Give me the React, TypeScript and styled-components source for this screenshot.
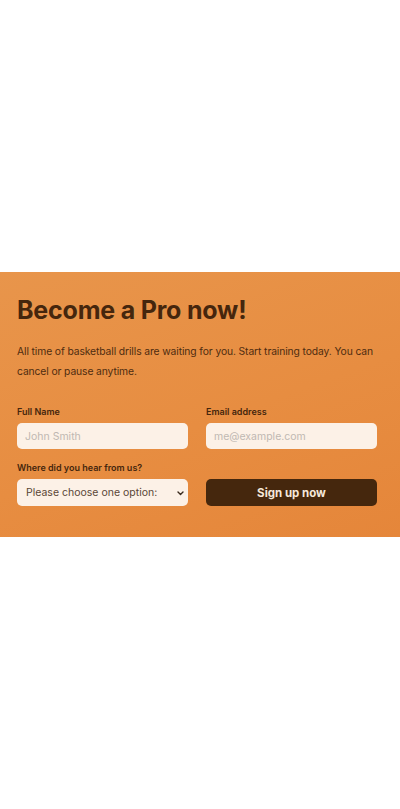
import React from "react";
import styled, { createGlobalStyle } from "styled-components";

const Global = createGlobalStyle`
  html, body { margin: 0; padding: 0; }
  body {
    font-family: Inter, "Noto Sans", "Liberation Sans", sans-serif;
    background: #ffffff;
  }
  * { box-sizing: border-box; }
`;

const Page = styled.div`
  min-height: 809px;
  display: flex;
  align-items: center;
`;

const Section = styled.section`
  width: 100%;
  background: linear-gradient(160deg, #e8954b 0%, #e78d41 55%, #e5863a 100%);
  padding: 23px 23px 31px 17px;
  color: #45260d;
`;

const Title = styled.h1`
  margin: 0;
  font-size: 25px;
  line-height: 30px;
  font-weight: 700;
  letter-spacing: -0.2px;
`;

const Lead = styled.p`
  margin: 17px 0 0;
  font-size: 10.3px;
  line-height: 19.5px;
  letter-spacing: -0.1px;
  color: #4e2c10;
`;

const Form = styled.form`
  margin-top: 25px;
  display: grid;
  grid-template-columns: minmax(0, 1fr) minmax(0, 1fr);
  column-gap: 18px;
  row-gap: 13px;
`;

const Field = styled.div`
  display: flex;
  flex-direction: column;
  gap: 5px;
  min-width: 0;
`;

const Label = styled.label`
  font-size: 9px;
  line-height: 12px;
  font-weight: 600;
  color: #45260d;
`;

const Input = styled.input`
  width: 100%;
  min-width: 0;
  height: 26px;
  border: none;
  border-radius: 5px;
  background: #fcf1e7;
  padding: 0 8px;
  font-family: inherit;
  font-size: 10.5px;
  color: #45260d;
  outline: none;
  &::placeholder { color: #bfb8b2; }
`;

const SelectWrap = styled.div`
  position: relative;
  width: 100%;
`;

const Select = styled.select`
  appearance: none;
  width: 100%;
  min-width: 0;
  height: 27px;
  border: none;
  border-radius: 5px;
  background: #fcf1e7;
  padding: 0 18px 0 9px;
  font-family: inherit;
  font-size: 10.5px;
  color: #5a4636;
  outline: none;
`;

const Chevron = styled.svg`
  position: absolute;
  right: 4px;
  top: 50%;
  width: 7px;
  height: 5px;
  margin-top: -2px;
  pointer-events: none;
`;

const ButtonCell = styled.div`
  display: flex;
  align-items: flex-end;
  min-width: 0;
`;

const Button = styled.button`
  width: 100%;
  height: 27px;
  border: none;
  border-radius: 5px;
  background: #45270d;
  color: #f6e8da;
  font-family: inherit;
  font-size: 11.5px;
  font-weight: 700;
  cursor: pointer;
`;

export default function App() {
  return (
    <>
      <Global />
      <Page>
        <Section>
          <Title>Become a Pro now!</Title>
          <Lead>
            All time of basketball drills are waiting for you. Start training today. You can cancel or pause anytime.
          </Lead>
          <Form onSubmit={(e) => e.preventDefault()}>
            <Field>
              <Label htmlFor="name">Full Name</Label>
              <Input id="name" placeholder="John Smith" />
            </Field>
            <Field>
              <Label htmlFor="email">Email address</Label>
              <Input id="email" placeholder="me@example.com" />
            </Field>
            <Field>
              <Label htmlFor="src">Where did you hear from us?</Label>
              <SelectWrap>
                <Select id="src" defaultValue="">
                  <option value="">Please choose one option:</option>
                  <option value="friends">Friends and family</option>
                  <option value="youtube">YouTube video</option>
                  <option value="podcast">Podcast</option>
                </Select>
                <Chevron viewBox="0 0 7 5" fill="none">
                  <path d="M1 1l2.5 2.5L6 1" stroke="#3a2a1e" strokeWidth="1.4" strokeLinecap="round" strokeLinejoin="round" />
                </Chevron>
              </SelectWrap>
            </Field>
            <ButtonCell>
              <Button type="submit">Sign up now</Button>
            </ButtonCell>
          </Form>
        </Section>
      </Page>
    </>
  );
}
